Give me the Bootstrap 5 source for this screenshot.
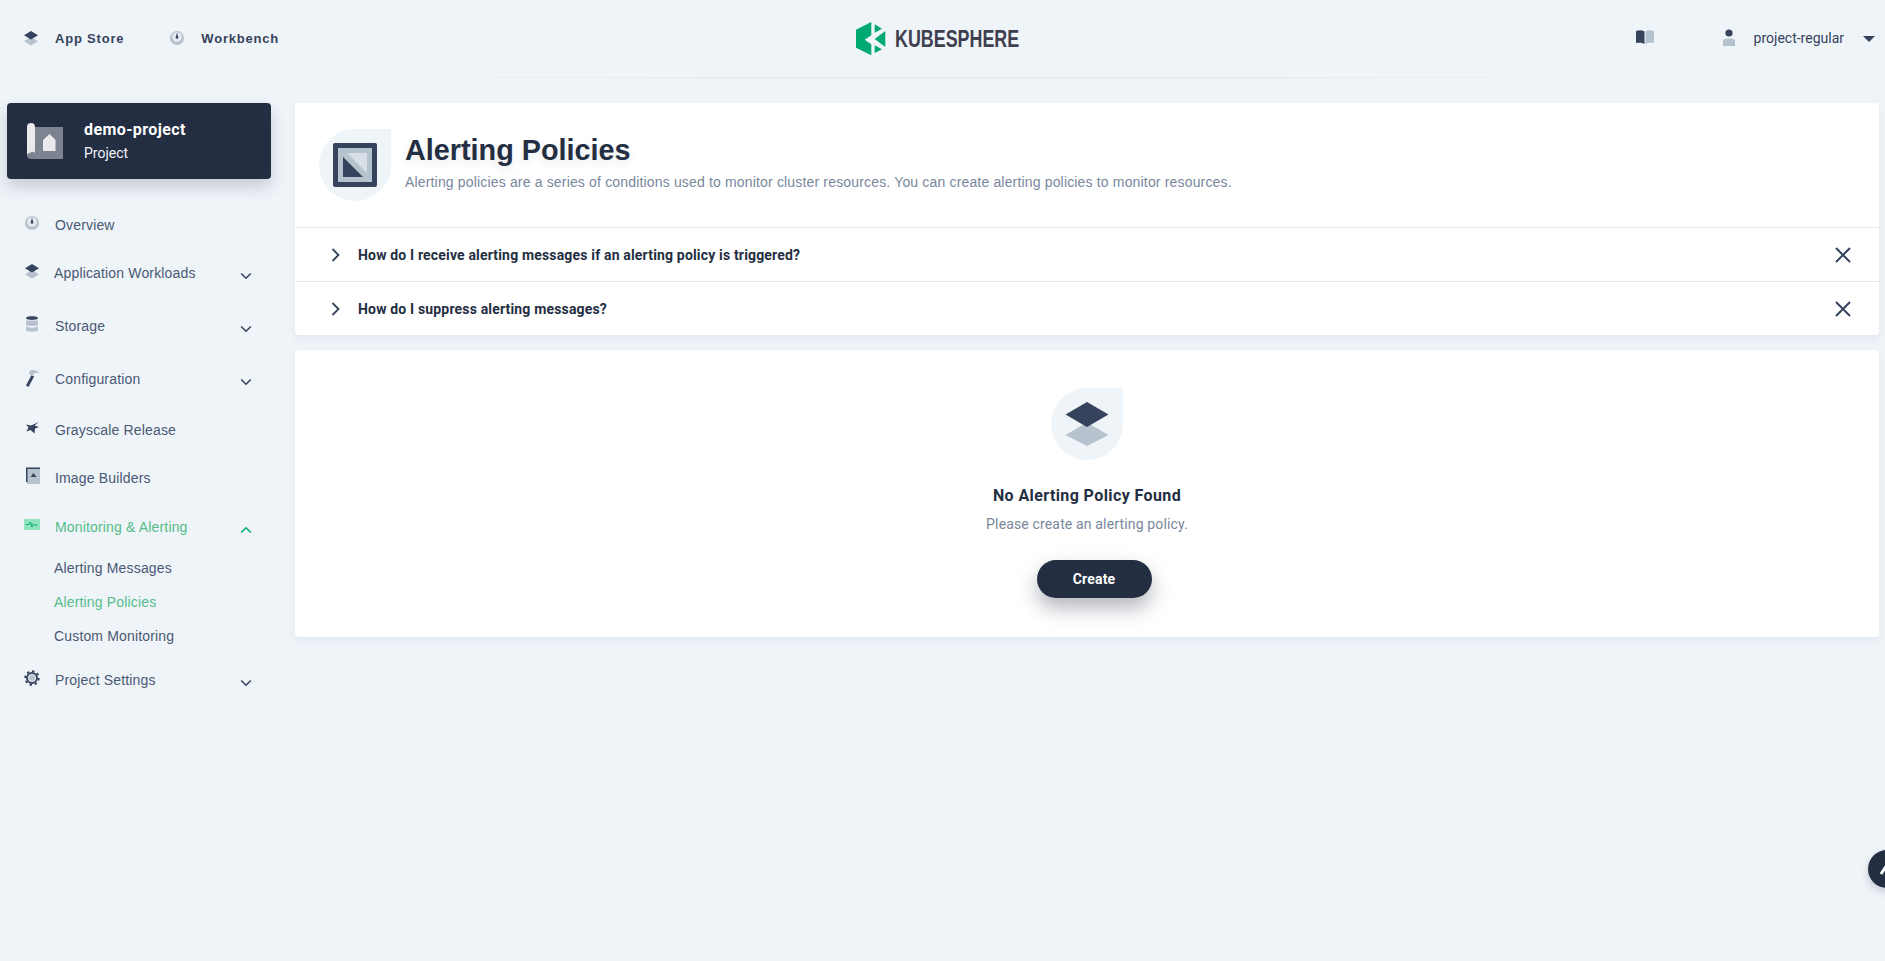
<!DOCTYPE html>
<html lang="en">
<head>
    <meta charset="UTF-8">
    <meta name="viewport" content="width=device-width, initial-scale=1.0">
    <title>Alerting Policies - KubeSphere</title>
    <link href="https://cdn.jsdelivr.net/npm/bootstrap@5.3.0/dist/css/bootstrap.min.css" rel="stylesheet">
    <script src="https://cdn.jsdelivr.net/npm/bootstrap@5.3.0/dist/js/bootstrap.bundle.min.js"></script>
    <style>
        html, body { height: 100%; }
        body {
            background: #eff4f9;
            color: #242e42;
            font-family: "Liberation Sans", Arial, sans-serif;
            overflow: hidden;
            font-size: 14px;
        }
        .ks-top {
            height: 78px;
            position: relative;
            padding: 0 10px 0 19px;
        }
        .ks-top::after {
            content: "";
            position: absolute;
            left: 15%; right: 10%; bottom: 0;
            height: 1px;
            background: linear-gradient(90deg, #eff4f9, #e3e9ef 30%, #e3e9ef 70%, #eff4f9);
        }
        .ks-top-side { width: 620px; }
        .ks-toplink {
            color: #36435c;
            font-weight: 700;
            font-size: 13px;
            letter-spacing: .8px;
            text-decoration: none;
        }
        .ks-toplink svg { margin-right: 12px; margin-bottom: 3px; }
        .ks-toplink + .ks-toplink { margin-left: 41px; }
        .ks-logo { margin-right: 14px; }
        .ks-logo-text {
            font-family: "Liberation Sans", sans-serif;
            font-size: 24px;
            font-weight: 700;
            color: #3f3e4e;
            display: inline-block;
            transform: scaleX(.745);
            transform-origin: left center;
            width: 129px;
            margin-left: 9px;
            white-space: nowrap;
        }
        .ks-user {
            font-family: Roboto, sans-serif;
            font-size: 14px;
            color: #36435c;
            margin-bottom: 2px;
        }
        .ks-user-ico { margin: 0 18px 3px 68px; }
        .ks-caret {
            width: 0; height: 0;
            margin-left: 19px;
            border-left: 6px solid transparent;
            border-right: 6px solid transparent;
            border-top: 6px solid #36435c;
        }
        .ks-side { width: 295px; flex: none; padding: 25px 24px 0 7px; }
        .ks-project {
            background: #242e42;
            border-radius: 4px;
            height: 76px;
            box-shadow: 0 8px 16px rgba(36, 46, 66, .2);
            color: #fff;
            padding-left: 20px;
            margin-bottom: 26px;
        }
        .ks-project svg { margin-right: 21px; flex: none; }
        .ks-project-name { font-family: Roboto, sans-serif; font-weight: 700; font-size: 16px; line-height: 20px; margin-bottom: 3px; letter-spacing: .4px; }
        .ks-project-type { font-family: Roboto, sans-serif; font-size: 14px; line-height: 20px; color: #eff4f9; }
        .ks-menu-row {
            color: #4a5974;
            height: 40px;
            padding-left: 13px;
            padding-right: 19px;
            letter-spacing: .16px;
            text-decoration: none;
        }
        .ks-menu-row .ks-ico { width: 24px; height: 24px; flex: none; margin-right: 11px; margin-top: -4px; }
        .ks-menu-row.ks-tight .ks-ico { margin-right: 10px; }
        .ks-menu-row.ks-active { color: #55bc8a; }
        .ks-menu-row .ks-chev { margin-left: auto; margin-top: 5px; }
        .ks-gap-4 { margin-top: 4px; }
        .ks-gap-7 { margin-top: 7px; }
        .ks-gap-8 { margin-top: 8px; }
        .ks-gap-9 { margin-top: 9px; }
        .ks-gap-11 { margin-top: 11px; }
        .ks-gap-13 { margin-top: 13px; }
        .ks-sub {
            color: #4a5974;
            display: block;
            height: 34px;
            line-height: 34px;
            padding-left: 47px;
            letter-spacing: .16px;
            text-decoration: none;
        }
        .ks-sub.ks-active { color: #55bc8a; }
        .ks-main { flex: 1; padding: 25px 6px 0 0; min-width: 0; }
        .ks-panel {
            background: #fff;
            border-radius: 4px;
            box-shadow: 0 4px 8px rgba(36, 46, 66, .06);
        }
        .ks-head { height: 124px; padding: 26px 0 0 24px; }
        .ks-drop {
            width: 72px; height: 72px;
            background: #eff4f9;
            border-radius: 50% 0 50% 50%;
            flex: none;
        }
        .ks-head-text { margin-left: 14px; }
        .ks-title { font-size: 28.8px; font-weight: 700; line-height: 36px; margin: 3px 0 4px; text-shadow: 0 4px 8px rgba(36,46,66,.1); }
        .ks-desc { font-size: 14px; line-height: 20px; color: #79879c; letter-spacing: .165px; }
        .ks-faq {
            height: 54px;
            border-top: 1px solid #e3e9ef;
            padding: 1px 27px 0 36px;
            font-family: Roboto, sans-serif;
            font-weight: 700;
            font-size: 14px;
            letter-spacing: .17px;
            color: #242e42;
        }
        .ks-faq span { margin-left: 17px; }
        .ks-empty { height: 287px; margin-top: 15px; padding-top: 38px; }
        .ks-empty-title { font-family: Roboto, sans-serif; font-weight: 700; font-size: 16px; line-height: 24px; margin-top: 24px; letter-spacing: .4px; }
        .ks-empty-desc { font-family: Roboto, sans-serif; font-size: 14px; line-height: 20px; color: #79879c; margin-top: 6px; letter-spacing: .15px; }
        .ks-create {
            background: #242e42;
            color: #fff;
            border: 0;
            border-radius: 20px;
            width: 115px;
            height: 38px;
            font-family: Roboto, sans-serif;
            font-weight: 700;
            font-size: 14px;
            letter-spacing: .2px;
            margin: 26px 0 0 14px;
            box-shadow: 0 10px 20px rgba(36, 46, 66, .35);
        }
        .ks-totop {
            position: fixed;
            left: 1868px; top: 850px;
            width: 38px; height: 38px;
            border-radius: 50%;
            background: #242e42;
            box-shadow: 0 4px 8px rgba(36, 46, 66, .2);
        }
    </style>
</head>
<body>
    <svg width="0" height="0" class="position-absolute">
        <defs>
            <symbol id="i-layers" viewBox="0 0 24 24">
                <path d="M12 11 5 15.2l7 4.2 7-4.2z" fill="#b6c2cd"/>
                <path d="M12 5 5 9.2l7 4.2 7-4.2z" fill="#36435c"/>
            </symbol>
            <symbol id="i-gauge" viewBox="0 0 24 24">
                <circle cx="12" cy="12" r="7" fill="#b6c2cd"/>
                <circle cx="12" cy="11" r="4.800" fill="#e4eaf0"/>
                <path d="M12 6.500l1.300 5a1.300 1.300 0 1 1-2.600 0z" fill="#36435c"/>
            </symbol>
            <symbol id="i-chev" viewBox="0 0 12 8">
                <path d="M1.200 1.500 6 6.200l4.800-4.700" fill="none" stroke="#36435c" stroke-width="1.600"/>
            </symbol>
        </defs>
    </svg>

    <header class="ks-top d-flex align-items-center justify-content-between">
        <div class="ks-top-side d-flex align-items-center">
            <a href="#" class="ks-toplink d-flex align-items-center">
                <svg width="24" height="24"><use href="#i-layers"/></svg>
                App Store
            </a>
            <a href="#" class="ks-toplink d-flex align-items-center">
                <svg width="24" height="24"><use href="#i-gauge"/></svg>
                Workbench
            </a>
        </div>
        <div class="ks-logo d-flex align-items-center">
            <svg width="30" height="34" viewBox="0 0 30 34">
                <path d="M0 7.700 15.300 0v13.300l-6.600 4.400 6.600 4.600v11L0 25.700z" fill="#00a971"/>
                <path d="M18.700 2.300 26 6.700l-7.300 4z" fill="#00a971"/>
                <path d="M29.300 9v16l-10.600-8z" fill="#00a971"/>
                <path d="M18.700 23.300l7.300 4-7.300 3.700z" fill="#00a971"/>
            </svg>
            <span class="ks-logo-text">KUBESPHERE</span>
        </div>
        <div class="ks-top-side d-flex align-items-center justify-content-end">
            <svg width="18" height="14" viewBox="0 0 18 14" class="mb-1">
                <path d="M0 1c3-1 6-1 8.500.6V14C6 12.500 3 12.500 0 13z" fill="#36435c"/>
                <path d="M18 1c-3-1-6-1-8.500.6V14c2.500-1.500 5.500-1.500 8.500-1z" fill="#b6c2cd"/>
            </svg>
            <svg width="14" height="18" viewBox="0 0 14 18" class="ks-user-ico">
                <circle cx="7" cy="4" r="3.600" fill="#36435c"/>
                <path d="M1 11c2-2 10-2 12 0v6H1z" fill="#b6c2cd"/>
            </svg>
            <span class="ks-user">project-regular</span>
            <span class="ks-caret"></span>
        </div>
    </header>

    <div class="d-flex">
        <aside class="ks-side">
            <div class="ks-project d-flex align-items-center">
                <svg width="36" height="36" viewBox="0 0 36 36">
                    <path d="M8 4h28v32H4a4 4 0 0 1-4-4z" fill="#7d8491"/>
                    <path d="M4 0a4 4 0 0 1 4 4v26a3 3 0 0 0-5 0 3 3 0 0 0-3 2V4a4 4 0 0 1 4-4z" fill="#eaeaec"/>
                    <path d="M16 17l6.500-6 6 6v11H16z" fill="#eaeaec"/>
                </svg>
                <div>
                    <div class="ks-project-name">demo-project</div>
                    <div class="ks-project-type">Project</div>
                </div>
            </div>

            <a href="#" class="ks-menu-row d-flex align-items-center">
                <svg class="ks-ico"><use href="#i-gauge"/></svg>Overview
            </a>
            <a href="#" class="ks-menu-row ks-tight ks-gap-8 d-flex align-items-center">
                <svg class="ks-ico"><use href="#i-layers"/></svg>Application Workloads
                <svg class="ks-chev" width="12" height="8"><use href="#i-chev"/></svg>
            </a>
            <a href="#" class="ks-menu-row ks-gap-13 d-flex align-items-center">
                <svg class="ks-ico" viewBox="0 0 24 24">
                    <path d="M6 8.500h12v4c0 2-12 2-12 0z" fill="#b6c2cd"/>
                    <path d="M6 14.500c2 1.500 10 1.500 12 0V18c0 2-12 2-12 0z" fill="#b6c2cd"/>
                    <path d="M6 6c0-2.500 12-2.500 12 0s-12 2.500-12 0z" fill="#36435c"/>
                </svg>Storage
                <svg class="ks-chev" width="12" height="8"><use href="#i-chev"/></svg>
            </a>
            <a href="#" class="ks-menu-row ks-gap-13 d-flex align-items-center">
                <svg class="ks-ico" viewBox="0 0 24 24">
                    <path d="M6 20.500l5.500-10.500 2.600 1.400L8.500 22z" fill="#36435c"/>
                    <path d="M9 6.500c3-2.500 7-2 11 2-3-1-5-1-6 0l-1.500 2.500-3.500-2 .8-1.500z" fill="#b6c2cd"/>
                </svg>Configuration
                <svg class="ks-chev" width="12" height="8"><use href="#i-chev"/></svg>
            </a>
            <a href="#" class="ks-menu-row ks-gap-11 d-flex align-items-center">
                <svg class="ks-ico" viewBox="0 0 24 24">
                    <path d="M19 6l-4.500 3.500L19 11l-4 1.500-.5 5-4-3.500-4 1.500 2-4-2.500-3 5 1z" fill="#36435c"/>
                </svg>Grayscale Release
            </a>
            <a href="#" class="ks-menu-row ks-gap-8 d-flex align-items-center">
                <svg class="ks-ico" viewBox="0 0 24 24">
                    <path d="M7 4h13v16H7z" fill="#b6c2cd"/>
                    <path d="M6 3.500h14V5H7.500v13H6z" fill="#36435c"/>
                    <path d="M13.500 9l3 4h-6z" fill="#36435c"/>
                </svg>Image Builders
            </a>
            <a href="#" class="ks-menu-row ks-active ks-gap-9 d-flex align-items-center">
                <svg class="ks-ico" viewBox="0 0 24 24">
                    <rect x="4" y="6" width="16" height="11" rx="1" fill="#91e3bd"/>
                    <path d="M6 11.500h3l1.500-2.500 1.500 5 1.500-3 1 1h3" fill="none" stroke="#00a971" stroke-width="1"/>
                </svg>Monitoring &amp; Alerting
                <svg class="ks-chev" width="12" height="8" viewBox="0 0 12 8"><path d="M1.200 6.500 6 1.800l4.800 4.700" fill="none" stroke="#00a971" stroke-width="1.600"/></svg>
            </a>
            <div class="ks-gap-4">
                <a href="#" class="ks-sub">Alerting Messages</a>
                <a href="#" class="ks-sub ks-active">Alerting Policies</a>
                <a href="#" class="ks-sub">Custom Monitoring</a>
            </div>
            <a href="#" class="ks-menu-row ks-gap-7 d-flex align-items-center">
                <svg class="ks-ico" viewBox="0 0 24 24">
                    <circle cx="12" cy="12" r="5" fill="none" stroke="#36435c" stroke-width="2"/>
                    <circle cx="12" cy="12" r="6.800" fill="none" stroke="#36435c" stroke-width="1.800" stroke-dasharray="2.500 2.800"/>
                    <circle cx="12" cy="12" r="3" fill="#b6c2cd"/>
                </svg>Project Settings
                <svg class="ks-chev" width="12" height="8"><use href="#i-chev"/></svg>
            </a>
        </aside>

        <main class="ks-main">
            <section class="ks-panel">
                <div class="ks-head d-flex">
                    <div class="ks-drop d-flex align-items-center justify-content-center">
                        <svg width="44" height="44" viewBox="0 0 44 44">
                            <rect width="44" height="44" rx="2" fill="#36435c"/>
                            <rect x="5" y="5" width="34" height="34" fill="#b6c2cd"/>
                            <path d="M14 10h20v20z" fill="#d8dee5"/>
                            <path d="M10 14v20h20z" fill="#36435c"/>
                        </svg>
                    </div>
                    <div class="ks-head-text">
                        <div class="ks-title">Alerting Policies</div>
                        <div class="ks-desc">Alerting policies are a series of conditions used to monitor cluster resources. You can create alerting policies to monitor resources.</div>
                    </div>
                </div>
                <div class="ks-faq d-flex align-items-center">
                    <svg width="10" height="14" viewBox="0 0 10 14"><path d="M1.500 1 7.500 7l-6 6" fill="none" stroke="#36435c" stroke-width="1.800"/></svg>
                    <span>How do I receive alerting messages if an alerting policy is triggered?</span>
                    <svg width="18" height="18" viewBox="0 0 18 18" class="ms-auto"><path d="M2 2l14 14M16 2 2 16" stroke="#36435c" stroke-width="2"/></svg>
                </div>
                <div class="ks-faq d-flex align-items-center">
                    <svg width="10" height="14" viewBox="0 0 10 14"><path d="M1.500 1 7.500 7l-6 6" fill="none" stroke="#36435c" stroke-width="1.800"/></svg>
                    <span>How do I suppress alerting messages?</span>
                    <svg width="18" height="18" viewBox="0 0 18 18" class="ms-auto"><path d="M2 2l14 14M16 2 2 16" stroke="#36435c" stroke-width="2"/></svg>
                </div>
            </section>

            <section class="ks-panel ks-empty d-flex flex-column align-items-center">
                <div class="ks-drop d-flex align-items-center justify-content-center">
                    <svg width="44" height="44" viewBox="0 0 44 44">
                        <path d="M22 20.500 43.500 33 22 44 .5 33z" fill="#b6c2cd"/>
                        <path d="M22 0 43.500 12.500 22 25 .5 12.500z" fill="#36435c"/>
                    </svg>
                </div>
                <div class="ks-empty-title">No Alerting Policy Found</div>
                <div class="ks-empty-desc">Please create an alerting policy.</div>
                <button class="ks-create">Create</button>
            </section>
        </main>
    </div>
    <div class="ks-totop d-flex align-items-center justify-content-center">
        <svg width="18" height="14" viewBox="0 0 18 14"><path d="M3 12 9 3l6 9" fill="none" stroke="#fff" stroke-width="3"/></svg>
    </div>
</body>
</html>
